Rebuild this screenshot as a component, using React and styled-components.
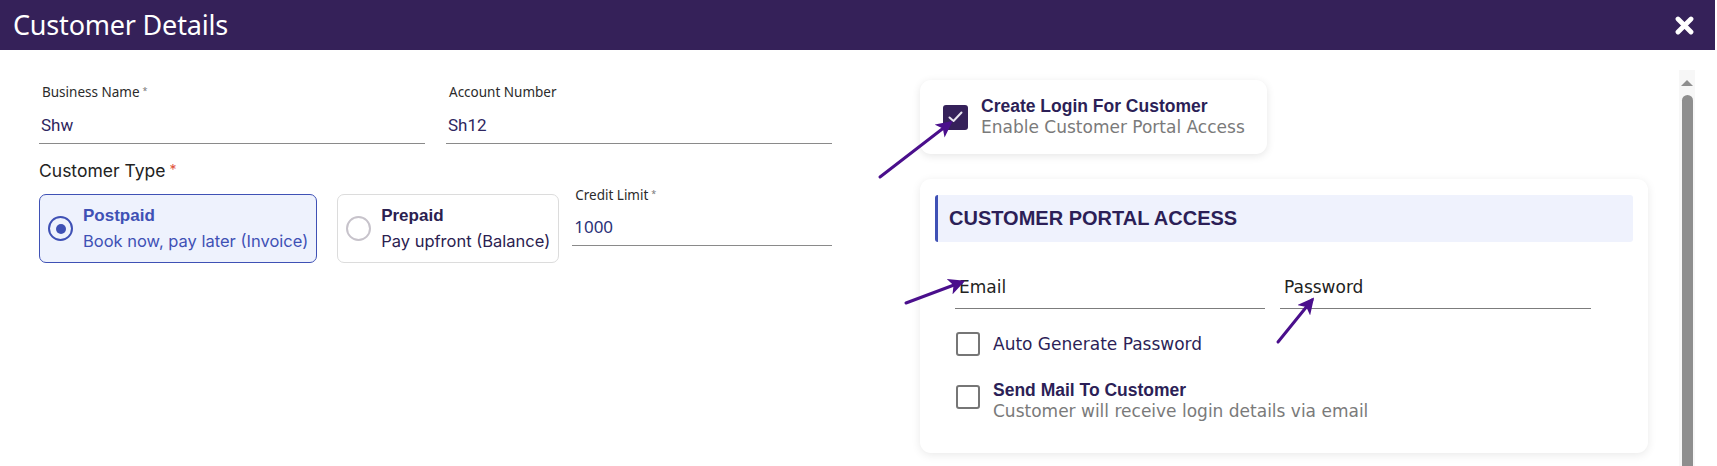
import React from 'react';
import styled, { createGlobalStyle } from 'styled-components';

const GlobalStyle = createGlobalStyle`
  html, body {
    margin: 0;
    padding: 0;
    background: #fff;
  }
  body {
    font-family: "Open Sans", "Noto Sans", sans-serif;
  }
`;

const Modal = styled.div`
  position: relative;
  width: 1717px;
  height: 466px;
  display: flex;
  flex-direction: column;
  overflow: hidden;
  background: #fff;
`;

const Header = styled.header`
  height: 50px;
  flex-shrink: 0;
  margin-right: 2px;
  background: #352159;
  display: flex;
  align-items: center;
  justify-content: space-between;
  padding: 0 21px 0 13px;
`;

const Title = styled.h1`
  margin: 0;
  font-family: "Noto Sans", "Open Sans", sans-serif;
  font-weight: 400;
  font-size: 27px;
  line-height: 30px;
  color: #fff;
  letter-spacing: -0.2px;
`;

const CloseButton = styled.button`
  border: 0;
  padding: 0;
  background: none;
  width: 19px;
  height: 19px;
  display: flex;
  cursor: pointer;
`;

const Body = styled.div`
  flex: 1;
  display: flex;
  min-height: 0;
`;

const Content = styled.div`
  flex: 1;
  display: flex;
  align-items: flex-start;
  gap: 88px;
  padding: 30px 0 0 39px;
`;

const LeftCol = styled.div`
  width: 793px;
  padding-top: 4px;
  display: flex;
  flex-direction: column;
`;

const FieldRow = styled.div`
  display: grid;
  grid-template-columns: 386px 386px;
  gap: 21px;
`;

const Field = styled.div`
  display: flex;
  flex-direction: column;
  flex: ${p => (p.$grow ? 1 : 'none')};
  margin-top: ${p => p.$offset || 0}px;
`;

const FieldLabel = styled.label`
  font-family: "Noto Sans", "Open Sans", sans-serif;
  font-size: 13.5px;
  line-height: 16px;
  color: #2b2b2b;
  padding-left: 3px;

  sup {
    font-size: 9px;
    color: #777;
    margin-left: 3px;
    vertical-align: 3px;
    line-height: 0;
  }
`;

const FieldValue = styled.div`
  margin-top: ${p => (p.$numeric ? 12 : 13)}px;
  padding: 0 0 6px 2px;
  border-bottom: 1px solid #8a8a8a;
  font-family: ${p => (p.$numeric ? '"Noto Sans", sans-serif' : 'Roboto, sans-serif')};
  font-size: 17px;
  line-height: 24px;
  color: ${p => (p.$numeric ? '#2a3178' : '#2e2660')};
`;

const SectionLabel = styled.div`
  margin-top: 15px;
  font-family: Inter, sans-serif;
  font-size: 17.5px;
  line-height: 22px;
  color: #222;

  span {
    color: #e0523a;
    font-size: 14px;
    margin-left: 4px;
    vertical-align: 2px;
  }
`;

const TypeRow = styled.div`
  margin-top: 4px;
  display: flex;
  align-items: flex-start;
`;

const TypeCard = styled.div`
  margin-top: 8px;
  margin-right: ${p => (p.$selected ? '20px' : '13px')};
  display: flex;
  align-items: center;
  gap: 10px;
  padding: 10px 8px 10px 8px;
  border-radius: 7px;
  border: 1px solid ${p => (p.$selected ? '#3f51b5' : '#dcdcdc')};
  background: ${p => (p.$selected ? '#eef2fd' : '#fff')};
  color: ${p => (p.$selected ? '#3f51b5' : '#2b2150')};
`;

const Radio = styled.span`
  width: 25px;
  height: 25px;
  box-sizing: border-box;
  border-radius: 50%;
  border: 2px solid ${p => (p.$checked ? '#3f51b5' : '#c7c3cb')};
  display: flex;
  align-items: center;
  justify-content: center;
  flex-shrink: 0;

  &::after {
    content: '';
    width: 10px;
    height: 10px;
    border-radius: 50%;
    background: ${p => (p.$checked ? '#3f51b5' : 'transparent')};
  }
`;

const TypeText = styled.div`
  display: flex;
  flex-direction: column;
`;

const TypeTitle = styled.div`
  font-family: "Liberation Sans", Arial, sans-serif;
  font-weight: 700;
  font-size: 17px;
  line-height: 22px;
`;

const TypeDesc = styled.div`
  margin-top: 3px;
  font-family: Inter, sans-serif;
  font-size: 16.5px;
  line-height: 22px;
`;

const RightCol = styled.div`
  width: 729px;
  display: flex;
  flex-direction: column;
  align-items: flex-start;
  gap: 25px;
`;

const LoginCard = styled.div`
  display: flex;
  align-items: center;
  gap: 13px;
  padding: 16px 22px 16px 23px;
  border-radius: 11px;
  background: #fff;
  box-shadow: 0 2px 9px rgba(0, 0, 0, 0.1);
`;

const CheckBox = styled.span`
  width: ${p => (p.$checked ? '25px' : '24px')};
  height: ${p => (p.$checked ? '25px' : '24px')};
  box-sizing: border-box;
  flex-shrink: 0;
  border-radius: 3px;
  border: ${p => (p.$checked ? '0' : '2px solid #767676')};
  background: ${p => (p.$checked ? '#35215a' : '#fff')};
  display: flex;
  align-items: center;
  justify-content: center;
  margin-top: ${p => p.$offset || 0}px;
`;

const OptionText = styled.div`
  display: flex;
  flex-direction: column;
`;

const OptionTitle = styled.div`
  font-family: "Liberation Sans", Arial, sans-serif;
  font-weight: 700;
  font-size: 17.5px;
  line-height: 20px;
  color: #2c1f57;
`;

const OptionDesc = styled.div`
  font-family: "DejaVu Sans", Verdana, sans-serif;
  font-size: 17px;
  line-height: 22px;
  color: #7a7a7a;
`;

const OptionPlain = styled.div`
  font-family: "DejaVu Sans", Verdana, sans-serif;
  font-size: 17px;
  line-height: 22px;
  color: #2c1f57;
`;

const PortalCard = styled.div`
  width: 728px;
  box-sizing: border-box;
  padding: 16px 15px 31px;
  border-radius: 11px;
  background: #fff;
  box-shadow: 0 2px 10px rgba(0, 0, 0, 0.09);
`;

const SectionBar = styled.div`
  height: 47px;
  display: flex;
  align-items: center;
  padding-left: 11px;
  border-left: 3px solid #3f51b5;
  border-radius: 3px;
  background: #eff2fd;
  font-family: "Liberation Sans", Arial, sans-serif;
  font-weight: 700;
  font-size: 20px;
  color: #2c1f57;
`;

const PortalBody = styled.div`
  padding-left: 20px;
  display: flex;
  flex-direction: column;
`;

const InputRow = styled.div`
  margin-top: 33px;
  display: grid;
  grid-template-columns: 310px 311px;
  gap: 15px;
`;

const UnderlineInput = styled.div`
  padding: 0 0 9px 4px;
  border-bottom: 1px solid #7c7c7c;
  font-family: "DejaVu Sans", Verdana, sans-serif;
  font-size: 17px;
  line-height: 24px;
  color: #222;
`;

const CheckRow = styled.div`
  margin-top: ${p => p.$gap}px;
  display: flex;
  align-items: ${p => (p.$top ? 'flex-start' : 'center')};
  gap: 13px;
  padding-left: 1px;
`;

const ScrollTrack = styled.div`
  width: 16px;
  margin: 20px 22px 0 0;
  background: #f7f7f7;
  display: flex;
  flex-direction: column;
  align-items: center;
`;

const ScrollArrow = styled.span`
  margin-top: 10px;
  width: 0;
  height: 0;
  border-left: 6px solid transparent;
  border-right: 6px solid transparent;
  border-bottom: 6px solid #8f8f8f;
`;

const ScrollThumb = styled.div`
  margin-top: 9px;
  width: 11px;
  flex: 1;
  border-radius: 6px 6px 0 0;
  background: #8e8e8e;
`;

const Annotations = styled.svg`
  position: absolute;
  inset: 0;
  pointer-events: none;
`;

const CheckMark = () => (
  <svg width="15" height="12" viewBox="0 0 15 12">
    <path d="M1.5 6.5 L5.5 10 L13.5 1.5" fill="none" stroke="#e9e6f0" strokeWidth="2" strokeLinecap="round" strokeLinejoin="round" />
  </svg>
);

const CloseIcon = () => (
  <svg width="19" height="19" viewBox="0 0 19 19">
    <path d="M3 3 L16 16 M16 3 L3 16" stroke="#fff" strokeWidth="4.8" strokeLinecap="round" />
  </svg>
);

const arrows = [
  { x1: 880, y1: 177, x2: 950, y2: 123 },
  { x1: 906, y1: 303, x2: 962, y2: 282 },
  { x1: 1278, y1: 342, x2: 1312, y2: 300 }
];

const Arrow = ({ x1, y1, x2, y2 }) => (
  <line x1={x1} y1={y1} x2={x2} y2={y2} stroke="#4a0f8c" strokeWidth="3" strokeLinecap="round" markerEnd="url(#head)" />
);

export default function App() {
  return (
    <>
      <GlobalStyle />
      <Modal>
        <Header>
          <Title>Customer Details</Title>
          <CloseButton aria-label="close">
            <CloseIcon />
          </CloseButton>
        </Header>
        <Body>
          <Content>
            <LeftCol>
              <FieldRow>
                <Field>
                  <FieldLabel>
                    Business Name<sup>*</sup>
                  </FieldLabel>
                  <FieldValue>Shw</FieldValue>
                </Field>
                <Field>
                  <FieldLabel>Account Number</FieldLabel>
                  <FieldValue>Sh12</FieldValue>
                </Field>
              </FieldRow>
              <SectionLabel>
                Customer Type<span>*</span>
              </SectionLabel>
              <TypeRow>
                <TypeCard $selected>
                  <Radio $checked />
                  <TypeText>
                    <TypeTitle>Postpaid</TypeTitle>
                    <TypeDesc>Book now, pay later (Invoice)</TypeDesc>
                  </TypeText>
                </TypeCard>
                <TypeCard>
                  <Radio />
                  <TypeText>
                    <TypeTitle>Prepaid</TypeTitle>
                    <TypeDesc>Pay upfront (Balance)</TypeDesc>
                  </TypeText>
                </TypeCard>
                <Field $grow $offset={1}>
                  <FieldLabel>
                    Credit Limit<sup>*</sup>
                  </FieldLabel>
                  <FieldValue $numeric>1000</FieldValue>
                </Field>
              </TypeRow>
            </LeftCol>

            <RightCol>
              <LoginCard>
                <CheckBox $checked>
                  <CheckMark />
                </CheckBox>
                <OptionText>
                  <OptionTitle>Create Login For Customer</OptionTitle>
                  <OptionDesc>Enable Customer Portal Access</OptionDesc>
                </OptionText>
              </LoginCard>

              <PortalCard>
                <SectionBar>CUSTOMER PORTAL ACCESS</SectionBar>
                <PortalBody>
                  <InputRow>
                    <UnderlineInput>Email</UnderlineInput>
                    <UnderlineInput>Password</UnderlineInput>
                  </InputRow>
                  <CheckRow $gap={23}>
                    <CheckBox />
                    <OptionPlain>Auto Generate Password</OptionPlain>
                  </CheckRow>
                  <CheckRow $gap={24} $top>
                    <CheckBox $offset={5} />
                    <OptionText>
                      <OptionTitle>Send Mail To Customer</OptionTitle>
                      <OptionDesc>Customer will receive login details via email</OptionDesc>
                    </OptionText>
                  </CheckRow>
                </PortalBody>
              </PortalCard>
            </RightCol>
          </Content>

          <ScrollTrack>
            <ScrollArrow />
            <ScrollThumb />
          </ScrollTrack>
        </Body>

        <Annotations width="1717" height="466" viewBox="0 0 1717 466">
          <defs>
            <marker id="head" viewBox="0 0 10 10" refX="8" refY="5" markerWidth="5.5" markerHeight="5.5" orient="auto">
              <path d="M0 0 L10 5 L0 10 L2.5 5 Z" fill="#4a0f8c" />
            </marker>
          </defs>
          {arrows.map((a, i) => (
            <Arrow key={i} {...a} />
          ))}
        </Annotations>
      </Modal>
    </>
  );
}
